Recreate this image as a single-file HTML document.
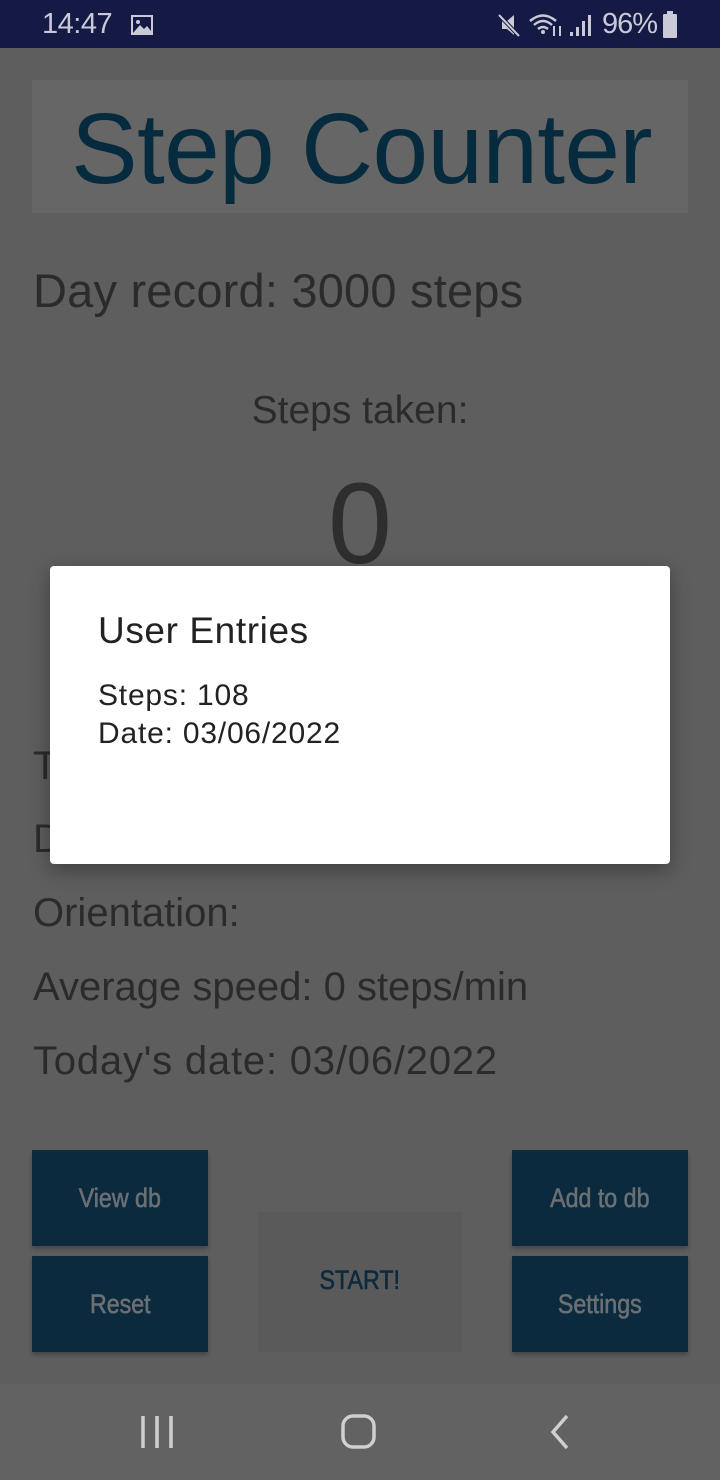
<!DOCTYPE html>
<html><head><meta charset="utf-8"><style>
*{margin:0;padding:0;box-sizing:border-box}
body{width:720px;height:1480px;background:#5e5e5e;font-family:"Liberation Sans",sans-serif;position:relative;overflow:hidden;color:#2b2b2b}
.a{position:absolute;white-space:nowrap}
.sb{position:absolute;left:0;top:0;width:720px;height:48px;background:#151a45;color:#c9cad6;font-size:29px}
.title{position:absolute;left:32px;top:80px;width:656px;height:133px;background:#666}
.btn{position:absolute;background:#0b2a3d;color:#6b7074;font-size:27px;display:flex;align-items:center;justify-content:center;box-shadow:0 3px 4px rgba(0,0,0,.25)}
.btn span{display:inline-block;transform:scaleX(0.86);-webkit-text-stroke:0.6px currentColor}
.t{font-size:40px;letter-spacing:0}
</style></head><body>
<div class="sb">
<div class="a" style="left:42px;top:8px;letter-spacing:-0.5px">14:47</div>
<svg class="a" style="left:130px;top:14px" width="24" height="22"><rect x="1" y="1" width="22" height="20" fill="#c9cad6"/><rect x="3" y="3" width="18" height="16" fill="#151a45"/><circle cx="8" cy="8" r="2" fill="#c9cad6"/><path d="M3 19 L10 11 L14 15 L17 12 L21 17 L21 19Z" fill="#c9cad6"/></svg>
<svg class="a" style="left:496px;top:12px" width="26" height="26"><path d="M6 9h5l7-6v20l-7-6H6z" fill="#c9cad6"/><path d="M3 3 L23 24" stroke="#151a45" stroke-width="4"/><path d="M3 3 L23 24" stroke="#c9cad6" stroke-width="2"/></svg>
<svg class="a" style="left:528px;top:12px" width="36" height="26"><path d="M2 9 Q15 -2 28 9" stroke="#c9cad6" stroke-width="2.5" fill="none"/><path d="M6 13 Q15 5 24 13" stroke="#c9cad6" stroke-width="2.5" fill="none"/><path d="M10 17 Q15 13 20 17" stroke="#c9cad6" stroke-width="2.5" fill="none"/><circle cx="15" cy="20" r="2" fill="#c9cad6"/><path d="M26 14v10M32 14v10" stroke="#c9cad6" stroke-width="2"/></svg>
<svg class="a" style="left:568px;top:12px" width="26" height="26"><rect x="2" y="20" width="3" height="4" fill="#c9cad6"/><rect x="8" y="15" width="3" height="9" fill="#c9cad6"/><rect x="14" y="9" width="3" height="15" fill="#c9cad6"/><rect x="20" y="3" width="3" height="21" fill="#c9cad6"/></svg>
<div class="a" style="left:602px;top:8px;letter-spacing:-1px">96%</div>
<svg class="a" style="left:662px;top:11px" width="16" height="27"><rect x="5" y="0" width="6" height="3" fill="#c9cad6"/><rect x="1" y="3" width="14" height="24" rx="1" fill="#c9cad6"/></svg>
</div>
<div class="title"></div>
<div class="a" style="left:71px;top:92px;font-size:100px;color:#062a3e;letter-spacing:-0.7px">Step Counter</div>
<div class="a" style="left:33px;top:263px;font-size:47px;letter-spacing:0.2px">Day record: 3000 steps</div>
<div class="a" style="left:0;width:720px;text-align:center;top:389px;font-size:39px">Steps taken:</div>
<div class="a" style="left:0;width:720px;text-align:center;top:458px;font-size:115px;color:#2e2e2e">0</div>
<div class="a t" style="left:33px;top:744px">T</div>
<div class="a t" style="left:33px;top:817px">D</div>
<div class="a t" style="left:33px;top:891px">Orientation:</div>
<div class="a t" style="left:33px;top:965px">Average speed: 0 steps/min</div>
<div class="a t" style="left:33px;top:1039px;letter-spacing:0.8px">Today's date: 03/06/2022</div>
<div style="position:absolute;left:50px;top:566px;width:620px;height:298px;background:#fff;border-radius:4px;box-shadow:0 6px 20px rgba(0,0,0,.35)"></div>
<div class="a" style="left:98px;top:610px;font-size:37px;color:#222;letter-spacing:0.6px">User Entries</div>
<div class="a" style="left:98px;top:677px;font-size:30px;color:#222;line-height:38px;letter-spacing:0.8px">Steps: 108<br>Date: 03/06/2022</div>
<div class="btn" style="left:32px;top:1150px;width:176px;height:96px"><span>View db</span></div>
<div class="btn" style="left:32px;top:1256px;width:176px;height:96px"><span>Reset</span></div>
<div class="btn" style="left:512px;top:1150px;width:176px;height:96px"><span>Add to db</span></div>
<div class="btn" style="left:512px;top:1256px;width:176px;height:96px"><span>Settings</span></div>
<div class="btn" style="left:258px;top:1212px;width:204px;height:140px;background:#5b5a5b;color:#0c2a3d;box-shadow:none;padding-bottom:4px"><span>START!</span></div>
<div style="position:absolute;left:0;top:1384px;width:720px;height:96px;background:#626262"></div>
<svg class="a" style="left:130px;top:1410px" width="460" height="42"><path d="M13 6v32M27 6v32M41 6v32" stroke="#cfcfcf" stroke-width="3.5"/><rect x="213" y="6" width="31" height="31" rx="10" stroke="#cfcfcf" stroke-width="3.5" fill="none"/><path d="M437 6 L423 22 L437 38" stroke="#cfcfcf" stroke-width="3.5" fill="none"/></svg>
</body></html>
